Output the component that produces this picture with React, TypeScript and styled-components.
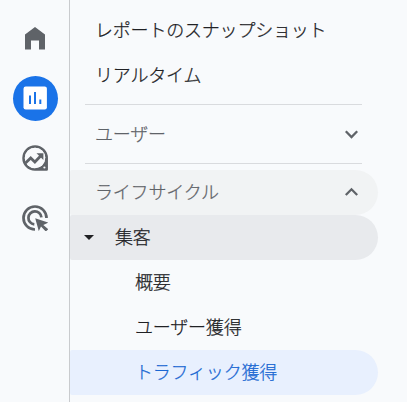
import React from 'react';
import styled, { createGlobalStyle } from 'styled-components';

const GlobalStyle = createGlobalStyle`
  *, *::before, *::after { box-sizing: border-box; }
  html, body { margin: 0; background: #f8fafc; overflow: hidden; }
`;

const Shell = styled.div`
  display: flex;
  width: 407px;
  height: 402px;
  overflow: hidden;
  background: #f8fafc;
  font-family: "Noto Sans CJK JP", sans-serif;
`;

const Rail = styled.nav`
  flex: none;
  width: 70px;
  padding-top: 8px;
  border-right: 1px solid #c9cbce;
  display: flex;
  flex-direction: column;
  align-items: center;
`;

const RailSlot = styled.div`
  height: 60px;
  padding-left: 2px;
  display: grid;
  place-items: center;
`;

const RailButton = styled.button<{ $active?: boolean }>`
  width: 45px;
  height: 45px;
  padding: 0 1px 0 0;
  border: 0;
  border-radius: 50%;
  display: grid;
  place-items: center;
  color: ${(p) => (p.$active ? '#fff' : '#5f6368')};
  background: ${(p) => (p.$active ? '#1a73e8' : 'transparent')};

  svg { display: block; }
`;

const Menu = styled.nav`
  width: 308px;
  padding-top: 8px;
`;

type Tone = 'plain' | 'section' | 'group' | 'selected';

const fills: Record<Tone, string> = {
  plain: 'transparent',
  section: '#f1f3f4',
  group: '#e8eaed',
  selected: '#e8f0fe',
};

const Row = styled.div<{ $tone?: Tone; $indent?: number; $muted?: boolean }>`
  display: flex;
  align-items: center;
  height: 45px;
  padding-left: ${(p) => p.$indent ?? 25}px;
  padding-right: 19px;
  border-radius: 2px 23px 23px 2px;
  background: ${(p) => fills[p.$tone ?? 'plain']};
  color: ${(p) => (p.$tone === 'selected' ? '#1967d2' : p.$muted ? '#5f6368' : '#202124')};
`;

const Label = styled.span`
  flex: 1;
  padding-bottom: 3px;
  font-size: 18px;
  font-weight: 300;
  line-height: 26px;
  letter-spacing: -0.2px;
  white-space: nowrap;
  -webkit-text-stroke: 0.25px currentColor;
`;

const Divider = styled.hr<{ $after: number }>`
  height: 1px;
  margin: 6px 16px ${(p) => p.$after}px 15px;
  border: 0;
  background: #d9dbde;
`;

const Caret = styled.svg`
  flex: none;
  width: 10px;
  height: 5px;
  margin-right: 21px;
`;

const Chevron = ({ up = false }: { up?: boolean }) => (
  <svg width="15" height="12" viewBox="0 0 15 12" fill="none" stroke="#5f6368" strokeWidth="2.3">
    <path d={up ? 'M1.8 8 7.5 2.3l5.7 5.7' : 'M1.8 2.3l5.7 5.7 5.7-5.7'} />
  </svg>
);

const HomeIcon = () => (
  <svg width="26" height="26" viewBox="0 0 26 26" fill="currentColor">
    <path d="M3 9.5 13 2l10 7.5V24.5h-6v-9h-8v9H3z" />
  </svg>
);

const ReportsIcon = () => (
  <svg width="24" height="24" viewBox="0 0 24 24">
    <rect x=".5" y=".5" width="23.4" height="23" rx="2.2" fill="currentColor" />
    <path d="M7 9.5V18M12 6v12M17.3 13.5V18" stroke="#1a73e8" strokeWidth="2" />
  </svg>
);

const ExploreIcon = () => (
  <svg width="26" height="26" viewBox="0 0 26 26" fill="none" stroke="currentColor">
    <path d="M24.7 13A11.6 11.6 0 1 0 13 24.6h11.7z" strokeWidth="2.5" strokeLinejoin="round" />
    <path d="M24 13A11.2 11.2 0 0 1 13 24h11z" strokeWidth="1.6" fill="currentColor" />
    <circle cx="22.4" cy="22.5" r="1.1" fill="#f8fafc" stroke="none" />
    <circle cx="13" cy="13" r="10.2" fill="#f8fafc" stroke="none" />
    <path d="M3.5 18l5.2-5.1 4.2 4.1 6.2-6.5" strokeWidth="2.8" />
    <path d="M14.5 8.2h6.9v6.9z" fill="currentColor" stroke="none" />
  </svg>
);

const AdsIcon = () => (
  <svg width="26" height="26" viewBox="0 0 26 26" fill="none" stroke="currentColor" strokeWidth="2.7">
    <path d="M24.5 13A11.5 11.5 0 1 0 13 24.5" />
    <path d="M19.4 12.4A6.5 6.5 0 1 0 12.3 19.4" />
    <path d="M13.2 13.2 26.3 17.7l-5 2.4 5 4.1-2.5 2.3-4.8-5.1-2.2 4.7z" fill="currentColor" stroke="none" />
  </svg>
);

export default function App() {
  return (
    <Shell>
      <GlobalStyle />
      <Rail>
        <RailSlot><RailButton aria-label="ホーム"><HomeIcon /></RailButton></RailSlot>
        <RailSlot><RailButton $active aria-label="レポート"><ReportsIcon /></RailButton></RailSlot>
        <RailSlot><RailButton aria-label="探索"><ExploreIcon /></RailButton></RailSlot>
        <RailSlot><RailButton aria-label="広告"><AdsIcon /></RailButton></RailSlot>
      </Rail>
      <Menu>
        <Row><Label>レポートのスナップショット</Label></Row>
        <Row><Label>リアルタイム</Label></Row>
        <Divider $after={7} />
        <Row $muted><Label>ユーザー</Label><Chevron /></Row>
        <Divider $after={6} />
        <Row $tone="section" $muted><Label>ライフサイクル</Label><Chevron up /></Row>
        <Row $tone="group" $indent={14}>
          <Caret viewBox="0 0 10 5"><path d="M0 0h10L5 5z" fill="#202124" /></Caret>
          <Label>集客</Label>
        </Row>
        <Row $indent={65}><Label>概要</Label></Row>
        <Row $indent={65}><Label>ユーザー獲得</Label></Row>
        <Row $tone="selected" $indent={65}><Label>トラフィック獲得</Label></Row>
      </Menu>
    </Shell>
  );
}
